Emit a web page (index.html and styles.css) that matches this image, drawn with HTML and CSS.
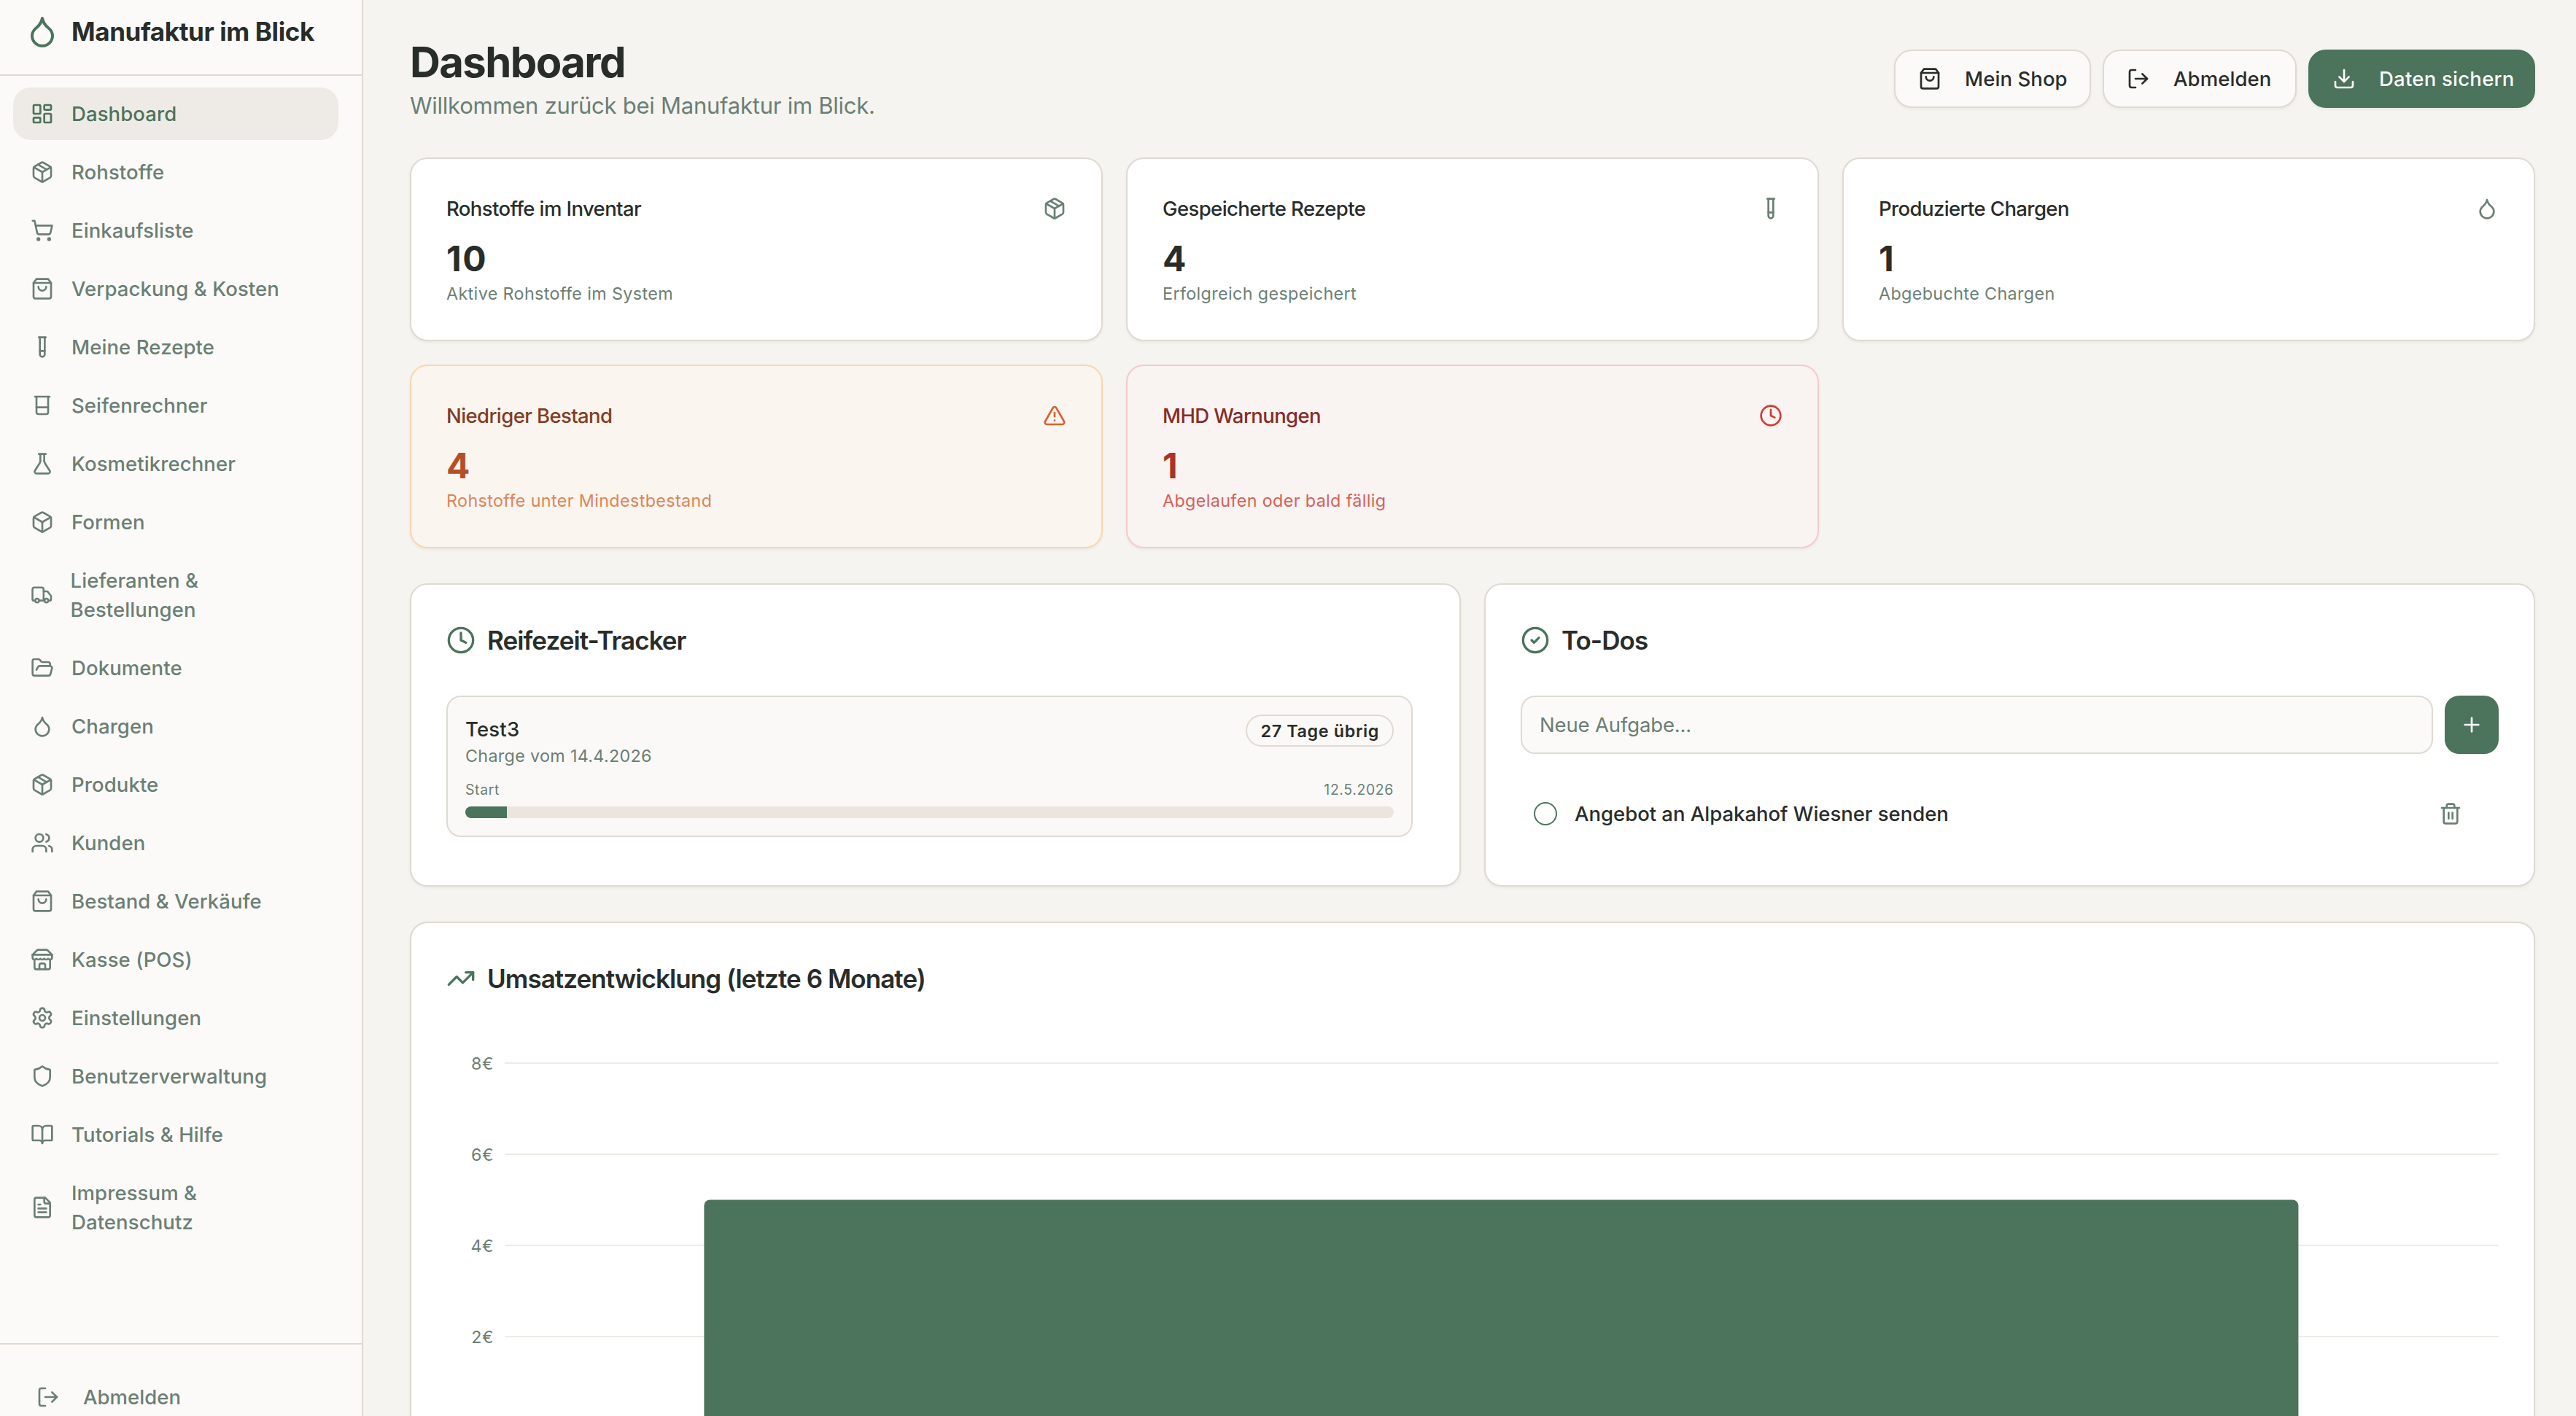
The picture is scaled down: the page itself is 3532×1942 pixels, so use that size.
FILE: index.html
```html
<!DOCTYPE html>
<html lang="de">
<head>
    <meta charset="UTF-8">
    <meta name="viewport" content="width=device-width, initial-scale=1.0">
    <title>Manufaktur im Blick – Dashboard</title>
    <link rel="stylesheet" href="styles.css">
</head>
<body>
    <!-- icon sprite -->
    <svg class="sprite" aria-hidden="true">
        <symbol id="i-drop" viewBox="0 0 24 24"><path d="M12 22a7 7 0 0 0 7-7c0-2-1-3.9-3-5.5s-3.5-4-4-6.5c-.5 2.5-2 4.9-4 6.5C6 11.1 5 13 5 15a7 7 0 0 0 7 7z"/></symbol>
        <symbol id="i-dashboard" viewBox="0 0 24 24"><rect width="7" height="9" x="3" y="3" rx="1"/><rect width="7" height="5" x="14" y="3" rx="1"/><rect width="7" height="9" x="14" y="12" rx="1"/><rect width="7" height="5" x="3" y="16" rx="1"/></symbol>
        <symbol id="i-package" viewBox="0 0 24 24"><path d="M11 21.73a2 2 0 0 0 2 0l7-4A2 2 0 0 0 21 16V8a2 2 0 0 0-1-1.73l-7-4a2 2 0 0 0-2 0l-7 4A2 2 0 0 0 3 8v8a2 2 0 0 0 1 1.73z"/><path d="M12 22V12"/><path d="M3.29 7 12 12l8.71-5"/><path d="m7.5 4.27 9 5.15"/></symbol>
        <symbol id="i-cart" viewBox="0 0 24 24"><circle cx="8" cy="21" r="1"/><circle cx="19" cy="21" r="1"/><path d="M2.05 2.05h2l2.66 12.42a2 2 0 0 0 2 1.58h9.78a2 2 0 0 0 1.95-1.57l1.65-7.43H5.12"/></symbol>
        <symbol id="i-bag" viewBox="0 0 24 24"><path d="M6 2 3 6v14a2 2 0 0 0 2 2h14a2 2 0 0 0 2-2V6l-3-4Z"/><path d="M3 6h18"/><path d="M16 10a4 4 0 0 1-8 0"/></symbol>
        <symbol id="i-tube" viewBox="0 0 24 24"><path d="M14.5 2v17.5c0 1.4-1.1 2.5-2.5 2.5c-1.4 0-2.5-1.1-2.5-2.5V2"/><path d="M8.5 2h7"/><path d="M14.5 16h-5"/></symbol>
        <symbol id="i-beaker" viewBox="0 0 24 24"><path d="M4.5 3h15"/><path d="M6 3v16a2 2 0 0 0 2 2h8a2 2 0 0 0 2-2V3"/><path d="M6 14h12"/></symbol>
        <symbol id="i-flask" viewBox="0 0 24 24"><path d="M10 2v7.31"/><path d="M14 9.3V2"/><path d="M8.5 2h7"/><path d="M14 9.3a6.5 6.5 0 0 0 .6 1.9l5.07 8.1a1.8 1.8 0 0 1-1.6 2.7H5.93a1.8 1.8 0 0 1-1.6-2.7l5.07-8.1a6.5 6.5 0 0 0 .6-1.9"/></symbol>
        <symbol id="i-box" viewBox="0 0 24 24"><path d="M21 8a2 2 0 0 0-1-1.73l-7-4a2 2 0 0 0-2 0l-7 4A2 2 0 0 0 3 8v8a2 2 0 0 0 1 1.73l7 4a2 2 0 0 0 2 0l7-4A2 2 0 0 0 21 16Z"/><path d="m3.3 7 8.7 5 8.7-5"/><path d="M12 22V12"/></symbol>
        <symbol id="i-truck" viewBox="0 0 24 24"><path d="M14 18V6a2 2 0 0 0-2-2H4a2 2 0 0 0-2 2v11a1 1 0 0 0 1 1h2"/><path d="M15 18H9"/><path d="M19 18h2a1 1 0 0 0 1-1v-3.65a1 1 0 0 0-.22-.624l-3.48-4.35A1 1 0 0 0 17.52 8H14"/><circle cx="17" cy="18" r="2"/><circle cx="7" cy="18" r="2"/></symbol>
        <symbol id="i-folder" viewBox="0 0 24 24"><path d="m6 14 1.5-2.9A2 2 0 0 1 9.24 10H20a2 2 0 0 1 1.94 2.5l-1.54 6a2 2 0 0 1-1.95 1.5H4a2 2 0 0 1-2-2V5a2 2 0 0 1 2-2h3.9a2 2 0 0 1 1.69.9l.81 1.2a2 2 0 0 0 1.67.9H18a2 2 0 0 1 2 2v2"/></symbol>
        <symbol id="i-users" viewBox="0 0 24 24"><path d="M16 21v-2a4 4 0 0 0-4-4H6a4 4 0 0 0-4 4v2"/><circle cx="9" cy="7" r="4"/><path d="M22 21v-2a4 4 0 0 0-3-3.87"/><path d="M16 3.13a4 4 0 0 1 0 7.75"/></symbol>
        <symbol id="i-store" viewBox="0 0 24 24"><path d="m2 7 4.41-4.41A2 2 0 0 1 7.83 2h8.34a2 2 0 0 1 1.42.59L22 7"/><path d="M4 12v8a2 2 0 0 0 2 2h12a2 2 0 0 0 2-2v-8"/><path d="M15 22v-4a2 2 0 0 0-2-2h-2a2 2 0 0 0-2 2v4"/><path d="M2 7h20"/><path d="M22 7v3a2 2 0 0 1-2 2a2.7 2.7 0 0 1-1.59-.63.7.7 0 0 0-.82 0A2.7 2.7 0 0 1 16 12a2.7 2.7 0 0 1-1.59-.63.7.7 0 0 0-.82 0A2.7 2.7 0 0 1 12 12a2.7 2.7 0 0 1-1.59-.63.7.7 0 0 0-.82 0A2.7 2.7 0 0 1 8 12a2.7 2.7 0 0 1-1.59-.63.7.7 0 0 0-.82 0A2.7 2.7 0 0 1 4 12a2 2 0 0 1-2-2V7"/></symbol>
        <symbol id="i-settings" viewBox="0 0 24 24"><path d="M9.671 4.136a2.34 2.34 0 0 1 4.659 0 2.34 2.34 0 0 0 3.319 1.915 2.34 2.34 0 0 1 2.33 4.033 2.34 2.34 0 0 0 0 3.831 2.34 2.34 0 0 1-2.33 4.033 2.34 2.34 0 0 0-3.319 1.915 2.34 2.34 0 0 1-4.659 0 2.34 2.34 0 0 0-3.32-1.915 2.34 2.34 0 0 1-2.33-4.033 2.34 2.34 0 0 0 0-3.831A2.34 2.34 0 0 1 6.35 6.051a2.34 2.34 0 0 0 3.319-1.915"/><circle cx="12" cy="12" r="3"/></symbol>
        <symbol id="i-shield" viewBox="0 0 24 24"><path d="M20 13c0 5-3.5 7.5-7.66 8.95a1 1 0 0 1-.67-.01C7.5 20.5 4 18 4 13V6a1 1 0 0 1 1-1c2 0 4.5-1.2 6.24-2.72a1.17 1.17 0 0 1 1.52 0C14.51 3.81 17 5 19 5a1 1 0 0 1 1 1z"/></symbol>
        <symbol id="i-book" viewBox="0 0 24 24"><path d="M12 7v14"/><path d="M3 18a1 1 0 0 1-1-1V4a1 1 0 0 1 1-1h5a4 4 0 0 1 4 4 4 4 0 0 1 4-4h5a1 1 0 0 1 1 1v13a1 1 0 0 1-1 1h-6a3 3 0 0 0-3 3 3 3 0 0 0-3-3z"/></symbol>
        <symbol id="i-file" viewBox="0 0 24 24"><path d="M15 2H6a2 2 0 0 0-2 2v16a2 2 0 0 0 2 2h12a2 2 0 0 0 2-2V7Z"/><path d="M14 2v4a2 2 0 0 0 2 2h4"/><path d="M10 9H8"/><path d="M16 13H8"/><path d="M16 17H8"/></symbol>
        <symbol id="i-logout" viewBox="0 0 24 24"><path d="m16 17 5-5-5-5"/><path d="M21 12H9"/><path d="M9 21H5a2 2 0 0 1-2-2V5a2 2 0 0 1 2-2h4"/></symbol>
        <symbol id="i-download" viewBox="0 0 24 24"><path d="M12 15V3"/><path d="M21 15v4a2 2 0 0 1-2 2H5a2 2 0 0 1-2-2v-4"/><path d="m7 10 5 5 5-5"/></symbol>
        <symbol id="i-warning" viewBox="0 0 24 24"><path d="m21.73 18-8-14a2 2 0 0 0-3.48 0l-8 14A2 2 0 0 0 4 21h16a2 2 0 0 0 1.73-3"/><path d="M12 9v4"/><path d="M12 17h.01"/></symbol>
        <symbol id="i-clock" viewBox="0 0 24 24"><circle cx="12" cy="12" r="10"/><path d="M12 6v6l4 2"/></symbol>
        <symbol id="i-check" viewBox="0 0 24 24"><circle cx="12" cy="12" r="10"/><path d="m9 12 2 2 4-4"/></symbol>
        <symbol id="i-plus" viewBox="0 0 24 24"><path d="M5 12h14"/><path d="M12 5v14"/></symbol>
        <symbol id="i-trash" viewBox="0 0 24 24"><path d="M3 6h18"/><path d="M19 6v14a2 2 0 0 1-2 2H7a2 2 0 0 1-2-2V6"/><path d="M8 6V4a2 2 0 0 1 2-2h4a2 2 0 0 1 2 2v2"/><path d="M10 11v6"/><path d="M14 11v6"/></symbol>
        <symbol id="i-trend" viewBox="0 0 24 24"><path d="M16 7h6v6"/><path d="m22 7-8.5 8.5-5-5L2 17"/></symbol>
    </svg>

    <div class="app">
        <aside class="sidebar">
            <div class="brand">
                <svg class="icon icon-xl"><use href="#i-drop"/></svg>
                <span>Manufaktur im Blick</span>
            </div>
            <nav class="nav">
                <a class="nav-item active"><svg class="icon"><use href="#i-dashboard"/></svg><span>Dashboard</span></a>
                <a class="nav-item"><svg class="icon"><use href="#i-package"/></svg><span>Rohstoffe</span></a>
                <a class="nav-item"><svg class="icon"><use href="#i-cart"/></svg><span>Einkaufsliste</span></a>
                <a class="nav-item"><svg class="icon"><use href="#i-bag"/></svg><span>Verpackung &amp; Kosten</span></a>
                <a class="nav-item"><svg class="icon"><use href="#i-tube"/></svg><span>Meine Rezepte</span></a>
                <a class="nav-item"><svg class="icon"><use href="#i-beaker"/></svg><span>Seifenrechner</span></a>
                <a class="nav-item"><svg class="icon"><use href="#i-flask"/></svg><span>Kosmetikrechner</span></a>
                <a class="nav-item"><svg class="icon"><use href="#i-box"/></svg><span>Formen</span></a>
                <a class="nav-item"><svg class="icon icon-narrow"><use href="#i-truck"/></svg><span>Lieferanten &amp;<br>Bestellungen</span></a>
                <a class="nav-item"><svg class="icon"><use href="#i-folder"/></svg><span>Dokumente</span></a>
                <a class="nav-item"><svg class="icon"><use href="#i-drop"/></svg><span>Chargen</span></a>
                <a class="nav-item"><svg class="icon"><use href="#i-package"/></svg><span>Produkte</span></a>
                <a class="nav-item"><svg class="icon"><use href="#i-users"/></svg><span>Kunden</span></a>
                <a class="nav-item"><svg class="icon"><use href="#i-bag"/></svg><span>Bestand &amp; Verkäufe</span></a>
                <a class="nav-item"><svg class="icon"><use href="#i-store"/></svg><span>Kasse (POS)</span></a>
                <a class="nav-item"><svg class="icon"><use href="#i-settings"/></svg><span>Einstellungen</span></a>
                <a class="nav-item"><svg class="icon"><use href="#i-shield"/></svg><span>Benutzerverwaltung</span></a>
                <a class="nav-item"><svg class="icon"><use href="#i-book"/></svg><span>Tutorials &amp; Hilfe</span></a>
                <a class="nav-item"><svg class="icon"><use href="#i-file"/></svg><span>Impressum &amp;<br>Datenschutz</span></a>
            </nav>
            <div class="sidebar-footer">
                <svg class="icon"><use href="#i-logout"/></svg>
                <span>Abmelden</span>
            </div>
        </aside>

        <main class="main">
            <header class="header">
                <div>
                    <h1>Dashboard</h1>
                    <p class="subtitle">Willkommen zurück bei Manufaktur im Blick.</p>
                </div>
                <div class="actions">
                    <button class="btn btn-shop"><svg class="icon"><use href="#i-bag"/></svg>Mein Shop</button>
                    <button class="btn btn-logout"><svg class="icon"><use href="#i-logout"/></svg>Abmelden</button>
                    <button class="btn btn-primary"><svg class="icon"><use href="#i-download"/></svg>Daten sichern</button>
                </div>
            </header>

            <section class="stats">
                <div class="card stat">
                    <div class="stat-head"><h3>Rohstoffe im Inventar</h3><svg class="icon"><use href="#i-package"/></svg></div>
                    <div class="stat-value">10</div>
                    <p class="stat-note">Aktive Rohstoffe im System</p>
                </div>
                <div class="card stat">
                    <div class="stat-head"><h3>Gespeicherte Rezepte</h3><svg class="icon"><use href="#i-tube"/></svg></div>
                    <div class="stat-value">4</div>
                    <p class="stat-note">Erfolgreich gespeichert</p>
                </div>
                <div class="card stat">
                    <div class="stat-head"><h3>Produzierte Chargen</h3><svg class="icon"><use href="#i-drop"/></svg></div>
                    <div class="stat-value">1</div>
                    <p class="stat-note">Abgebuchte Chargen</p>
                </div>
                <div class="card stat stat-orange">
                    <div class="stat-head"><h3>Niedriger Bestand</h3><svg class="icon"><use href="#i-warning"/></svg></div>
                    <div class="stat-value">4</div>
                    <p class="stat-note">Rohstoffe unter Mindestbestand</p>
                </div>
                <div class="card stat stat-red">
                    <div class="stat-head"><h3>MHD Warnungen</h3><svg class="icon"><use href="#i-clock"/></svg></div>
                    <div class="stat-value">1</div>
                    <p class="stat-note">Abgelaufen oder bald fällig</p>
                </div>
            </section>

            <section class="panels">
                <div class="card panel">
                    <h2 class="panel-title"><svg class="icon icon-lg"><use href="#i-clock"/></svg>Reifezeit-Tracker</h2>
                    <div class="tracker">
                        <div class="batch">
                            <div class="batch-head">
                                <div>
                                    <div class="batch-name">Test3</div>
                                    <div class="batch-date">Charge vom 14.4.2026</div>
                                </div>
                                <span class="badge">27 Tage übrig</span>
                            </div>
                            <div class="batch-range"><span>Start</span><span>12.5.2026</span></div>
                            <div class="progress"><div class="progress-fill" style="width: 4.5%"></div></div>
                        </div>
                    </div>
                </div>
                <div class="card panel">
                    <h2 class="panel-title"><svg class="icon icon-lg"><use href="#i-check"/></svg>To-Dos</h2>
                    <div class="todo-form">
                        <input type="text" class="todo-input" placeholder="Neue Aufgabe...">
                        <button class="todo-add"><svg class="icon"><use href="#i-plus"/></svg></button>
                    </div>
                    <div class="todo">
                        <span class="todo-check"></span>
                        <span class="todo-text">Angebot an Alpakahof Wiesner senden</span>
                        <button class="todo-delete"><svg class="icon"><use href="#i-trash"/></svg></button>
                    </div>
                </div>
            </section>

            <section class="card panel chart-card">
                <h2 class="panel-title"><svg class="icon icon-lg"><use href="#i-trend"/></svg>Umsatzentwicklung (letzte 6 Monate)</h2>
                <svg class="chart" width="2814" height="524" viewBox="0 0 2814 524">
                    <g class="chart-grid">
                        <path d="M80 40H2814"/>
                        <path d="M80 165H2814"/>
                        <path d="M80 290H2814"/>
                        <path d="M80 415H2814"/>
                    </g>
                    <g class="chart-labels">
                        <text x="65" y="49">8€</text>
                        <text x="65" y="174">6€</text>
                        <text x="65" y="299">4€</text>
                        <text x="65" y="424">2€</text>
                    </g>
                    <path class="chart-bar" d="M353.4 524V235.5a8 8 0 0 1 8-8H2531.4a8 8 0 0 1 8 8V524Z"/>
                </svg>
            </section>
        </main>
    </div>
</body>
</html>
```
FILE: styles.css
```css
:root {
    --bg: #f5f4f0;
    --surface: #fcfaf8;
    --border: #dfdad1;
    --text: #282d2a;
    --muted: #6b7f74;
    --primary: #4c735c;
}
* {
    box-sizing: border-box;
}
body {
    margin: 0;
    height: 1942px;
    overflow: hidden;
    background: var(--bg);
    color: var(--text);
    font-family: Inter, "Liberation Sans", sans-serif;
    font-size: 27.5px;
    line-height: 40px;
}
h1, h2, h3, p {
    margin: 0;
}
button, input {
    font: inherit;
    letter-spacing: inherit;
}
.sprite {
    display: none;
}
.icon {
    flex: none;
    width: 32px;
    height: 32px;
    fill: none;
    stroke: currentColor;
    stroke-width: 2;
    stroke-linecap: round;
    stroke-linejoin: round;
}
.icon-lg {
    width: 40px;
    height: 40px;
}
.icon-xl {
    width: 48px;
    height: 48px;
}
.icon-narrow {
    width: 30.5px;
}
.app {
    display: flex;
    height: 1942px;
}

/* sidebar */
.sidebar {
    display: flex;
    flex-direction: column;
    flex: none;
    width: 498px;
    background: var(--surface);
    border-right: 2px solid var(--border);
}
.brand {
    display: flex;
    align-items: center;
    gap: 16px;
    height: 104px;
    padding: 0 34px 16px;
    border-bottom: 2px solid var(--border);
    font-size: 35px;
    font-weight: 700;
    letter-spacing: -0.39px;
}
.brand .icon {
    color: var(--primary);
}
.nav {
    display: flex;
    flex: 1;
    flex-direction: column;
    gap: 8px;
    padding: 16px 32px 0 18px;
}
.nav-item {
    display: flex;
    align-items: center;
    gap: 24px;
    padding: 16px 24px;
    border-radius: 24px;
    color: var(--muted);
    font-weight: 500;
    letter-spacing: 0.1px;
}
.nav-item.active {
    background: #eeebe6;
    color: var(--primary);
}
.sidebar-footer {
    display: flex;
    gap: 32px;
    height: 100px;
    padding: 52px 50px 0;
    border-top: 2px solid var(--border);
    color: var(--muted);
    font-weight: 500;
    letter-spacing: 0.05px;
}
.sidebar-footer .icon {
    margin-top: 4px;
}

/* main */
.main {
    display: flex;
    flex: 1;
    flex-direction: column;
    gap: 48px;
    padding: 48px 56px 0 64px;
}
.header {
    display: flex;
    align-items: flex-start;
    justify-content: space-between;
    height: 120px;
}
h1 {
    font-size: 58px;
    line-height: 74px;
    letter-spacing: -1.6px;
}
.subtitle {
    margin-top: -1px;
    color: var(--muted);
    font-size: 31px;
    line-height: 48px;
    letter-spacing: -0.25px;
}
.actions {
    display: flex;
    gap: 16px;
    margin-top: 20px;
}
.btn {
    display: flex;
    align-items: center;
    gap: 32px;
    height: 80px;
    padding: 0 31px;
    background: var(--surface);
    border: 2px solid var(--border);
    border-radius: 24px;
    box-shadow: 0 2px 4px rgba(0, 0, 0, 0.05);
    color: var(--text);
    font-weight: 500;
    letter-spacing: 0.08px;
    white-space: nowrap;
}
.btn-shop {
    width: 270px;
}
.btn-logout {
    width: 266px;
}
.btn-primary {
    width: 311px;
    background: var(--primary);
    border-color: var(--primary);
    color: #fcfaf8;
    letter-spacing: 0.24px;
}
.card {
    background: #fff;
    border: 2px solid var(--border);
    border-radius: 24px;
    box-shadow: 0 2px 4px rgba(0, 0, 0, 0.05);
    padding: 48px;
}
.stats {
    display: grid;
    grid-template-columns: repeat(3, 1fr);
    gap: 32px;
}
.stat {
    height: 252px;
}
.stat-head {
    display: flex;
    align-items: center;
    justify-content: space-between;
    margin-bottom: 16px;
}
.stat-head h3 {
    font-size: 27.5px;
    font-weight: 500;
    letter-spacing: -0.6px;
}
.stat-head .icon {
    color: var(--muted);
}
.stat-value {
    font-size: 48px;
    font-weight: 700;
    line-height: 65px;
    letter-spacing: 1.5px;
}
.stat-note {
    color: var(--muted);
    font-size: 23.3px;
    line-height: 32px;
    letter-spacing: 0.38px;
}
.stat-orange {
    background: #faf5ef;
    border-color: #f9d7ad;
}
.stat-orange h3 { color: #843b24; }
.stat-orange .icon { color: #dc6033; }
.stat-orange .stat-value { color: #b44f29; }
.stat-orange .stat-note { color: #dd8459; }
.stat-red {
    background: #f9f3f1;
    border-color: #f6caca;
}
.stat-red h3 { color: #872b28; }
.stat-red .icon { color: #cf3b36; }
.stat-red .stat-value { color: #a8322d; }
.stat-red .stat-note { color: #d65f5a; }

.panels {
    display: grid;
    grid-template-columns: 1fr 1fr;
    gap: 32px;
}
.panels .panel {
    height: 416px;
}
.panel-title {
    display: flex;
    align-items: center;
    gap: 16px;
    margin-bottom: 48px;
    font-size: 35px;
    font-weight: 600;
    line-height: 56px;
    letter-spacing: -0.93px;
}
.panel-title .icon {
    color: var(--primary);
}
.tracker {
    padding-right: 16px;
}
.batch {
    padding: 24px;
    background: #fbf9f7;
    border: 2px solid var(--border);
    border-radius: 20px;
}
.batch-head {
    display: flex;
    align-items: flex-start;
    justify-content: space-between;
    margin-bottom: 15px;
}
.batch-name {
    font-weight: 500;
    line-height: 41px;
    letter-spacing: 0.2px;
}
.batch-date {
    color: var(--muted);
    font-size: 23.3px;
    line-height: 32px;
    letter-spacing: 0.33px;
}
.badge {
    padding: 5px 18px 3px 19px;
    border: 2px solid var(--border);
    border-radius: 22px;
    font-size: 23.3px;
    font-weight: 600;
    line-height: 32px;
    letter-spacing: 0.65px;
}
.batch-range {
    display: flex;
    justify-content: space-between;
    margin-bottom: 8px;
    color: var(--muted);
    font-size: 19.4px;
    line-height: 30px;
    letter-spacing: 0.65px;
}
.progress {
    height: 16px;
    overflow: hidden;
    background: #ece5de;
    border-radius: 8px;
}
.progress-fill {
    height: 100%;
    background: var(--primary);
}
.todo-form {
    display: flex;
    gap: 16px;
    margin-bottom: 32px;
}
.todo-input {
    flex: 1;
    height: 80px;
    padding: 0 24px;
    background: var(--surface);
    border: 2px solid var(--border);
    border-radius: 20px;
    letter-spacing: -0.15px;
}
.todo-input::placeholder {
    color: var(--muted);
    opacity: 1;
}
.todo-add {
    display: flex;
    align-items: center;
    justify-content: center;
    width: 74px;
    height: 80px;
    padding: 0;
    background: var(--primary);
    border: 0;
    border-radius: 20px;
    color: #fff;
}
.todo {
    display: flex;
    align-items: center;
    gap: 24px;
    height: 100px;
    padding: 0 34px 0 18px;
}
.todo-check {
    width: 32px;
    height: 32px;
    border: 2px solid var(--primary);
    border-radius: 50%;
}
.todo-text {
    flex: 1;
    font-weight: 500;
    letter-spacing: -0.02px;
}
.todo-delete {
    display: flex;
    padding: 16px;
    background: none;
    border: 0;
    color: var(--muted);
}

/* chart, runs off the bottom of the view */
.chart-card {
    flex: none;
    padding-bottom: 0;
    border-bottom: 0;
    border-radius: 24px 24px 0 0;
}
.chart {
    display: block;
}
.chart-grid {
    stroke: #ecebe6;
    stroke-width: 2;
}
.chart-labels {
    fill: var(--muted);
    font-size: 23.3px;
    letter-spacing: 0.5px;
    text-anchor: end;
}
.chart-bar {
    fill: var(--primary);
}
```
